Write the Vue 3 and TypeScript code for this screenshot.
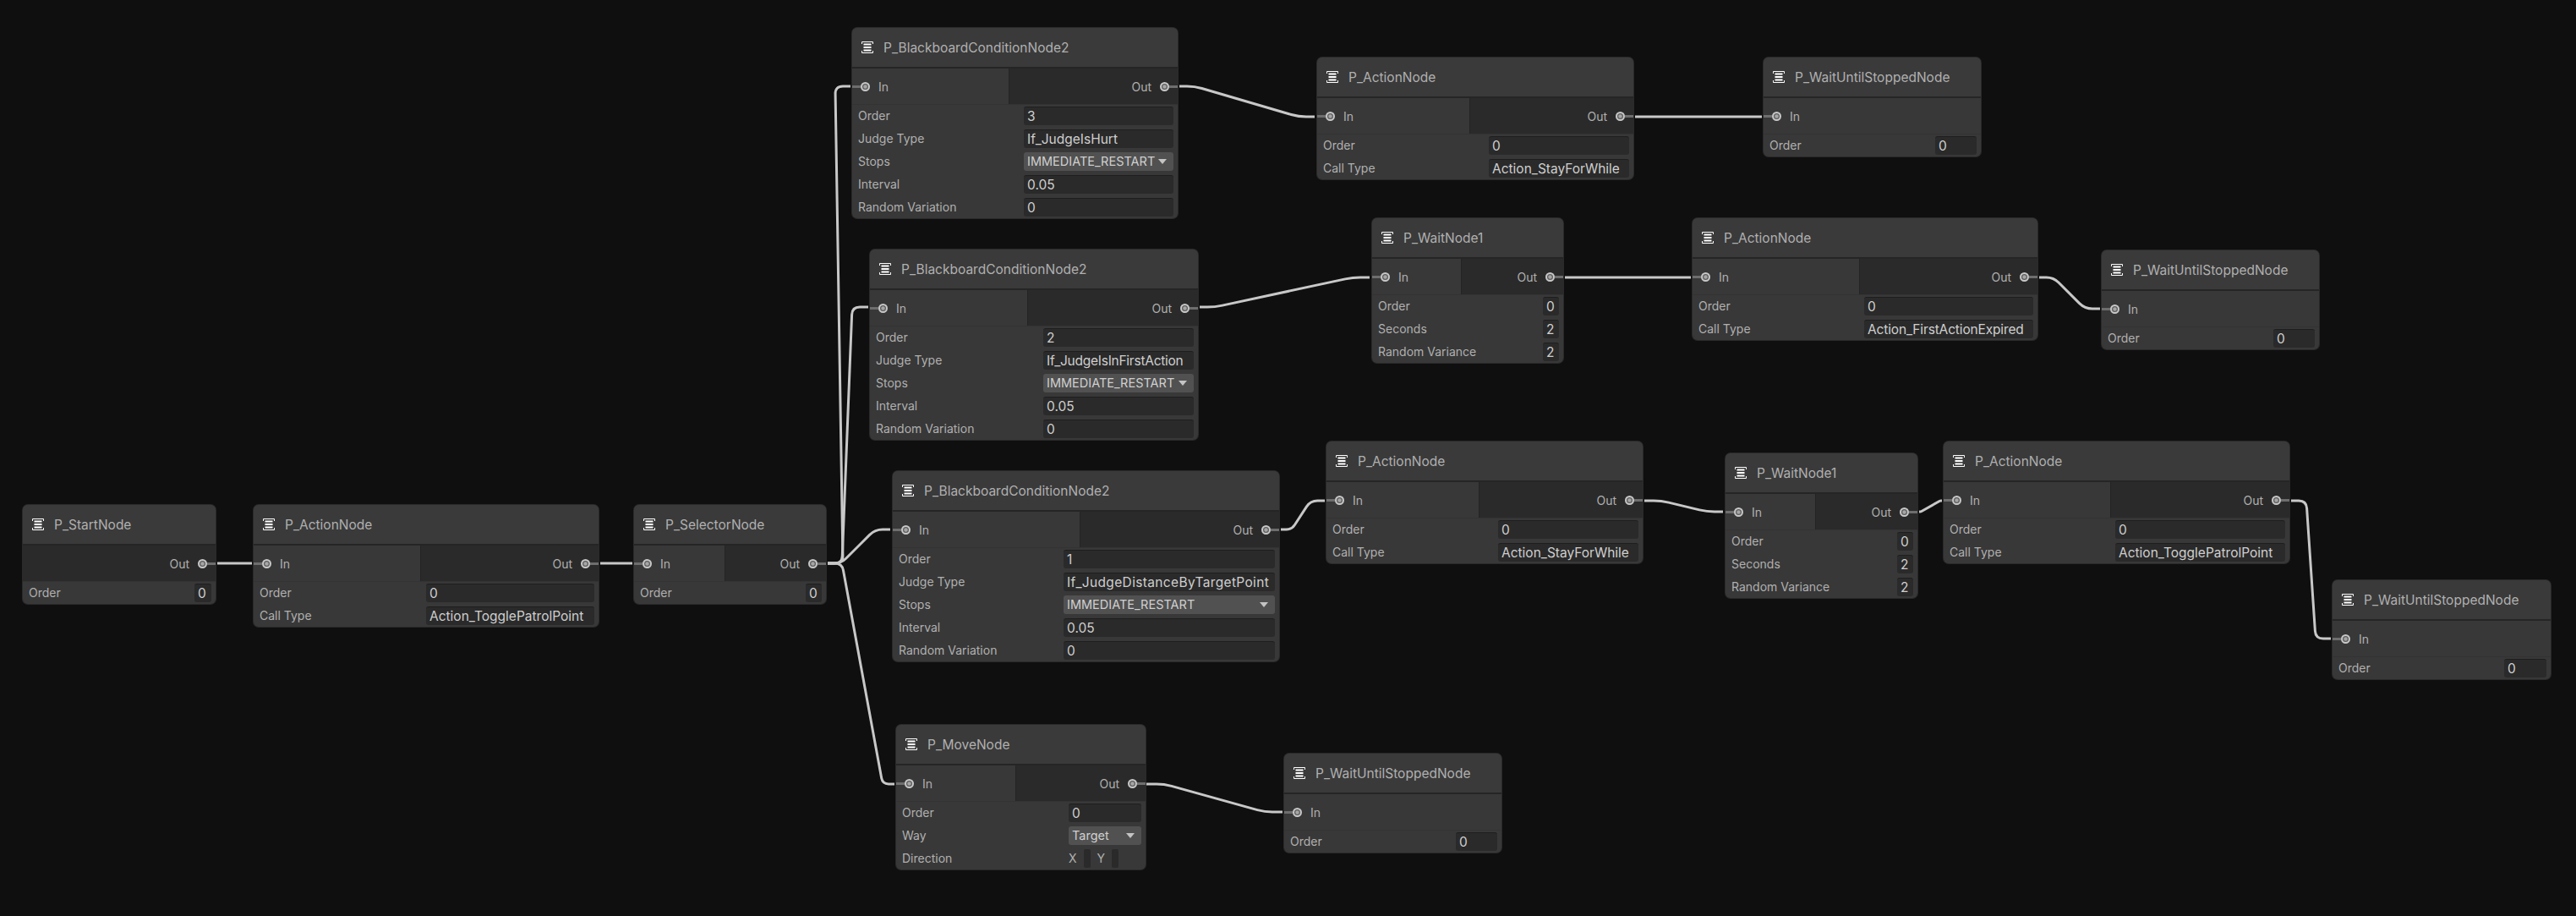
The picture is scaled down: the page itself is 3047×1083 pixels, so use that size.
<script setup lang="ts">
type Field = { label: string; value?: string; kind?: 'input' | 'select' | 'xy'; track?: number }
type GraphNode = {
  title: string
  x: number
  y: number
  right: number
  split?: number
  hasIn?: boolean
  hasOut?: boolean
  inputLeft: number
  fields: Field[]
}

const order = (v: string): Field => ({ label: 'Order', value: v })
const call = (v: string, track = 0): Field => ({ label: 'Call Type', value: v, track })
const bb = (o: string, judge: string, track = 0): Field[] => [
  order(o),
  { label: 'Judge Type', value: judge, track },
  { label: 'Stops', value: 'IMMEDIATE_RESTART', kind: 'select' },
  { label: 'Interval', value: '0.05' },
  { label: 'Random Variation', value: '0' }
]
const wait = (): Field[] => [
  order('0'),
  { label: 'Seconds', value: '2' },
  { label: 'Random Variance', value: '2' }
]

const nodes: GraphNode[] = [
  { title: 'P_StartNode', x: 27, y: 597, right: 255, hasOut: true, inputLeft: 230, fields: [order('0')] },
  { title: 'P_ActionNode', x: 300, y: 597, right: 708, split: 497, hasIn: true, hasOut: true, inputLeft: 504, fields: [order('0'), call('Action_TogglePatrolPoint')] },
  { title: 'P_SelectorNode', x: 750, y: 597, right: 977, split: 857, hasIn: true, hasOut: true, inputLeft: 953, fields: [order('0')] },
  { title: 'P_BlackboardConditionNode2', x: 1008, y: 33, right: 1393, split: 1193, hasIn: true, hasOut: true, inputLeft: 1211, fields: bb('3', 'If_JudgeIsHurt') },
  { title: 'P_BlackboardConditionNode2', x: 1029, y: 295, right: 1417, split: 1215, hasIn: true, hasOut: true, inputLeft: 1234, fields: bb('2', 'If_JudgeIsInFirstAction', -0.25) },
  { title: 'P_BlackboardConditionNode2', x: 1056, y: 557, right: 1513, split: 1277, hasIn: true, hasOut: true, inputLeft: 1258, fields: bb('1', 'If_JudgeDistanceByTargetPoint', 0.35) },
  {
    title: 'P_MoveNode', x: 1060, y: 857, right: 1355, split: 1201, hasIn: true, hasOut: true, inputLeft: 1264,
    fields: [order('0'), { label: 'Way', value: 'Target', kind: 'select' }, { label: 'Direction', kind: 'xy' }]
  },
  { title: 'P_WaitUntilStoppedNode', x: 1519, y: 891, right: 1776, hasIn: true, inputLeft: 1722, fields: [order('0')] },
  { title: 'P_ActionNode', x: 1558, y: 68, right: 1932, split: 1738, hasIn: true, hasOut: true, inputLeft: 1761, fields: [order('0'), call('Action_StayForWhile')] },
  { title: 'P_WaitUntilStoppedNode', x: 2086, y: 68, right: 2343, hasIn: true, inputLeft: 2289, fields: [order('0')] },
  { title: 'P_WaitNode1', x: 1623, y: 258, right: 1849, split: 1728, hasIn: true, hasOut: true, inputLeft: 1825, fields: wait() },
  { title: 'P_ActionNode', x: 2002, y: 258, right: 2410, split: 2199, hasIn: true, hasOut: true, inputLeft: 2205, fields: [order('0'), call('Action_FirstActionExpired', -0.15)] },
  { title: 'P_WaitUntilStoppedNode', x: 2486, y: 296, right: 2743, hasIn: true, inputLeft: 2689, fields: [order('0')] },
  { title: 'P_ActionNode', x: 1569, y: 522, right: 1943, split: 1749, hasIn: true, hasOut: true, inputLeft: 1772, fields: [order('0'), call('Action_StayForWhile')] },
  { title: 'P_WaitNode1', x: 2041, y: 536, right: 2268, split: 2147, hasIn: true, hasOut: true, inputLeft: 2244, fields: wait() },
  { title: 'P_ActionNode', x: 2299, y: 522, right: 2708, split: 2496, hasIn: true, hasOut: true, inputLeft: 2502, fields: [order('0'), call('Action_TogglePatrolPoint')] },
  { title: 'P_WaitUntilStoppedNode', x: 2759, y: 686, right: 3017, hasIn: true, inputLeft: 2962, fields: [order('0')] }
]

type Pt = [number, number]

function wire(pts: Pt[], radius = 9): string {
  let d = `M${pts[0][0]} ${pts[0][1]}`
  for (let i = 1; i < pts.length - 1; i++) {
    const [px, py] = pts[i - 1]
    const [cx, cy] = pts[i]
    const [nx, ny] = pts[i + 1]
    const l1 = Math.hypot(cx - px, cy - py)
    const l2 = Math.hypot(nx - cx, ny - cy)
    const r = Math.min(radius, l1 / 2, l2 / 2)
    const ax = cx + ((px - cx) / l1) * r
    const ay = cy + ((py - cy) / l1) * r
    const bx = cx + ((nx - cx) / l2) * r
    const by = cy + ((ny - cy) / l2) * r
    d += ` L${ax.toFixed(1)} ${ay.toFixed(1)} Q${cx} ${cy} ${bx.toFixed(1)} ${by.toFixed(1)}`
  }
  const last = pts[pts.length - 1]
  return d + ` L${last[0]} ${last[1]}`
}

const wires: string[] = [
  wire([[257, 666], [298, 666]]),
  wire([[710, 666], [748, 666]]),
  wire([[979, 666], [997, 666], [988, 102], [1006, 102]]),
  wire([[979, 666], [996, 666], [1008, 363], [1027, 363]]),
  wire([[979, 666], [995, 666], [1035, 626], [1053, 626]]),
  wire([[979, 666], [996, 666], [1044, 927], [1058, 927]]),
  wire([[1395, 102], [1413, 102], [1536, 138], [1555, 138]]),
  wire([[1419, 363], [1437, 363], [1600, 328], [1620, 328]]),
  wire([[1515, 626], [1528, 626], [1550, 592], [1567, 592]]),
  wire([[1356, 927], [1377, 927], [1496, 960], [1517, 960]]),
  wire([[1934, 138], [2084, 138]]),
  wire([[1851, 328], [2000, 328]]),
  wire([[2412, 328], [2429, 328], [2466, 365], [2484, 365]]),
  wire([[1945, 592], [1965, 592], [2019, 605], [2038, 605]]),
  wire([[2270, 605], [2272, 605], [2295, 592], [2297, 592]]),
  wire([[2710, 592], [2728, 592], [2739, 755], [2757, 755]])
]
</script>

<template>
  <div class="canvas">
    <svg class="wires" width="3047" height="1083" viewBox="0 0 3047 1083" fill="none">
      <path v-for="(d, i) in wires" :key="i" :d="d" class="wire" />
    </svg>

    <section
      v-for="(n, i) in nodes"
      :key="i"
      class="node"
      :style="{ left: n.x + 'px', top: n.y + 'px', width: n.right - n.x + 'px' }"
    >
      <header class="head">
        <svg class="ico" width="14" height="14" viewBox="0 0 14 14" fill="none">
          <path d="M.5 3V.5H13.5V3M.5 11V13.5H13.5V11" stroke="#fff" stroke-width="1" />
          <rect x="2.5" y="2.5" width="9" height="2" fill="#fff" />
          <rect x="2.5" y="6" width="9" height="2" fill="#fff" />
          <rect x="2.5" y="9.5" width="9" height="2" fill="#fff" />
        </svg>
        <span class="title">{{ n.title }}</span>
      </header>

      <div class="ports">
        <div
          v-if="n.hasIn"
          class="port-cell in"
          :class="{ wide: !n.hasOut }"
          :style="n.split ? { width: n.split - n.x + 'px' } : undefined"
        >
          <i class="stub stub-in"></i>
          <i class="dot"></i>
          <span class="port-label">In</span>
        </div>
        <div v-if="n.hasOut" class="port-cell out" :class="{ full: !n.hasIn }">
          <span class="port-label">Out</span>
          <i class="dot"></i>
          <i class="stub stub-out"></i>
        </div>
      </div>

      <div class="fields">
        <div v-for="f in n.fields" :key="f.label" class="row">
          <span class="label">{{ f.label }}</span>
          <div v-if="f.kind === 'select'" class="select" :style="{ width: n.right - 5 - n.inputLeft + 'px' }">
            <span class="val small">{{ f.value }}</span>
            <i class="caret"></i>
          </div>
          <div v-else-if="f.kind === 'xy'" class="xy" :style="{ width: n.right - 5 - n.inputLeft + 'px' }">
            <span class="label">X</span>
            <i class="mini"></i>
            <span class="label">Y</span>
            <i class="mini"></i>
          </div>
          <div v-else class="input" :style="{ width: n.right - 5 - n.inputLeft + 'px' }">
            <span class="val" :style="f.track ? { letterSpacing: f.track + 'px' } : undefined">{{ f.value }}</span>
          </div>
        </div>
      </div>
    </section>
  </div>
</template>

<style scoped>
.canvas {
  position: relative;
  width: 3047px;
  height: 1083px;
  overflow: hidden;
  background: #0f0f0f;
  font-family: Inter, "Liberation Sans", sans-serif;
}
.wires {
  position: absolute;
  left: 0;
  top: 0;
}
.wire {
  stroke: #c8c8c8;
  stroke-width: 3;
}
.node {
  position: absolute;
  box-sizing: border-box;
  display: flex;
  flex-direction: column;
  background: #383838;
  border-radius: 6px;
  box-shadow: 0 0 0 1px #2a2a2a;
}
.head {
  display: flex;
  align-items: center;
  height: 46px;
  padding-left: 11px;
  gap: 12px;
  border-bottom: 2px solid #252525;
  background: #3a3a3a;
  border-radius: 6px 6px 0 0;
}
.ico {
  flex: none;
}
.title {
  color: #b0b0b0;
  font-size: 15.5px;
  white-space: nowrap;
}
.ports {
  display: flex;
  height: 42px;
  border-bottom: 1px solid #333;
}
.port-cell {
  position: relative;
  display: flex;
  align-items: center;
  height: 100%;
}
.port-cell.in {
  flex: none;
  padding-left: 10px;
  gap: 10px;
  box-sizing: border-box;
}
.port-cell.in.wide {
  flex: 1;
}
.port-cell.out {
  flex: 1;
  justify-content: flex-end;
  padding-right: 10px;
  gap: 10px;
  background: #2a2a2a;
  border-left: 1px solid #242424;
}
.port-cell.out.full {
  border-left: 0;
}
.port-label {
  color: #b0b0b0;
  font-size: 14px;
}
.dot {
  position: relative;
  flex: none;
  box-sizing: border-box;
  width: 11px;
  height: 11px;
  border-radius: 50%;
  border: 2px solid #c8c8c8;
  background: radial-gradient(circle, #a6a6a6 0 1.6px, #5c5c5c 2.8px);
}
.stub {
  position: absolute;
  top: 50%;
  height: 3px;
  margin-top: -1.5px;
  width: 10px;
  background: #6e6e6e;
}
.stub-in {
  left: 0;
}
.stub-out {
  right: 0;
}
.fields {
  display: flex;
  flex-direction: column;
  margin-top: -1px;
}
.row {
  display: flex;
  align-items: center;
  justify-content: space-between;
  height: 27px;
  padding: 0 5px 0 7px;
}
.label {
  color: #b0b0b0;
  font-size: 14px;
  white-space: nowrap;
}
.input,
.select {
  position: relative;
  box-sizing: border-box;
  display: flex;
  align-items: center;
  flex: none;
  height: 22px;
  padding-left: 4px;
  border-radius: 3px;
  overflow: hidden;
}
.input {
  background: #2a2a2a;
  border-top: 1px solid #1e1e1e;
}
.select {
  background: #515151;
}
.val {
  color: #cfcfcf;
  font-size: 15.5px;
  white-space: nowrap;
}
.val.small {
  font-size: 14.5px;
}
.caret {
  position: absolute;
  right: 8px;
  top: 8px;
  width: 0;
  height: 0;
  border-left: 5px solid transparent;
  border-right: 5px solid transparent;
  border-top: 6px solid #c4c4c4;
}
.xy {
  display: flex;
  align-items: center;
  gap: 8px;
  flex: none;
  height: 22px;
}
.mini {
  width: 8px;
  height: 22px;
  background: #2a2a2a;
  border-radius: 2px;
}
</style>

<style>
html,
body {
  margin: 0;
  height: 1083px;
  overflow: hidden;
  background: #0f0f0f;
}
</style>
